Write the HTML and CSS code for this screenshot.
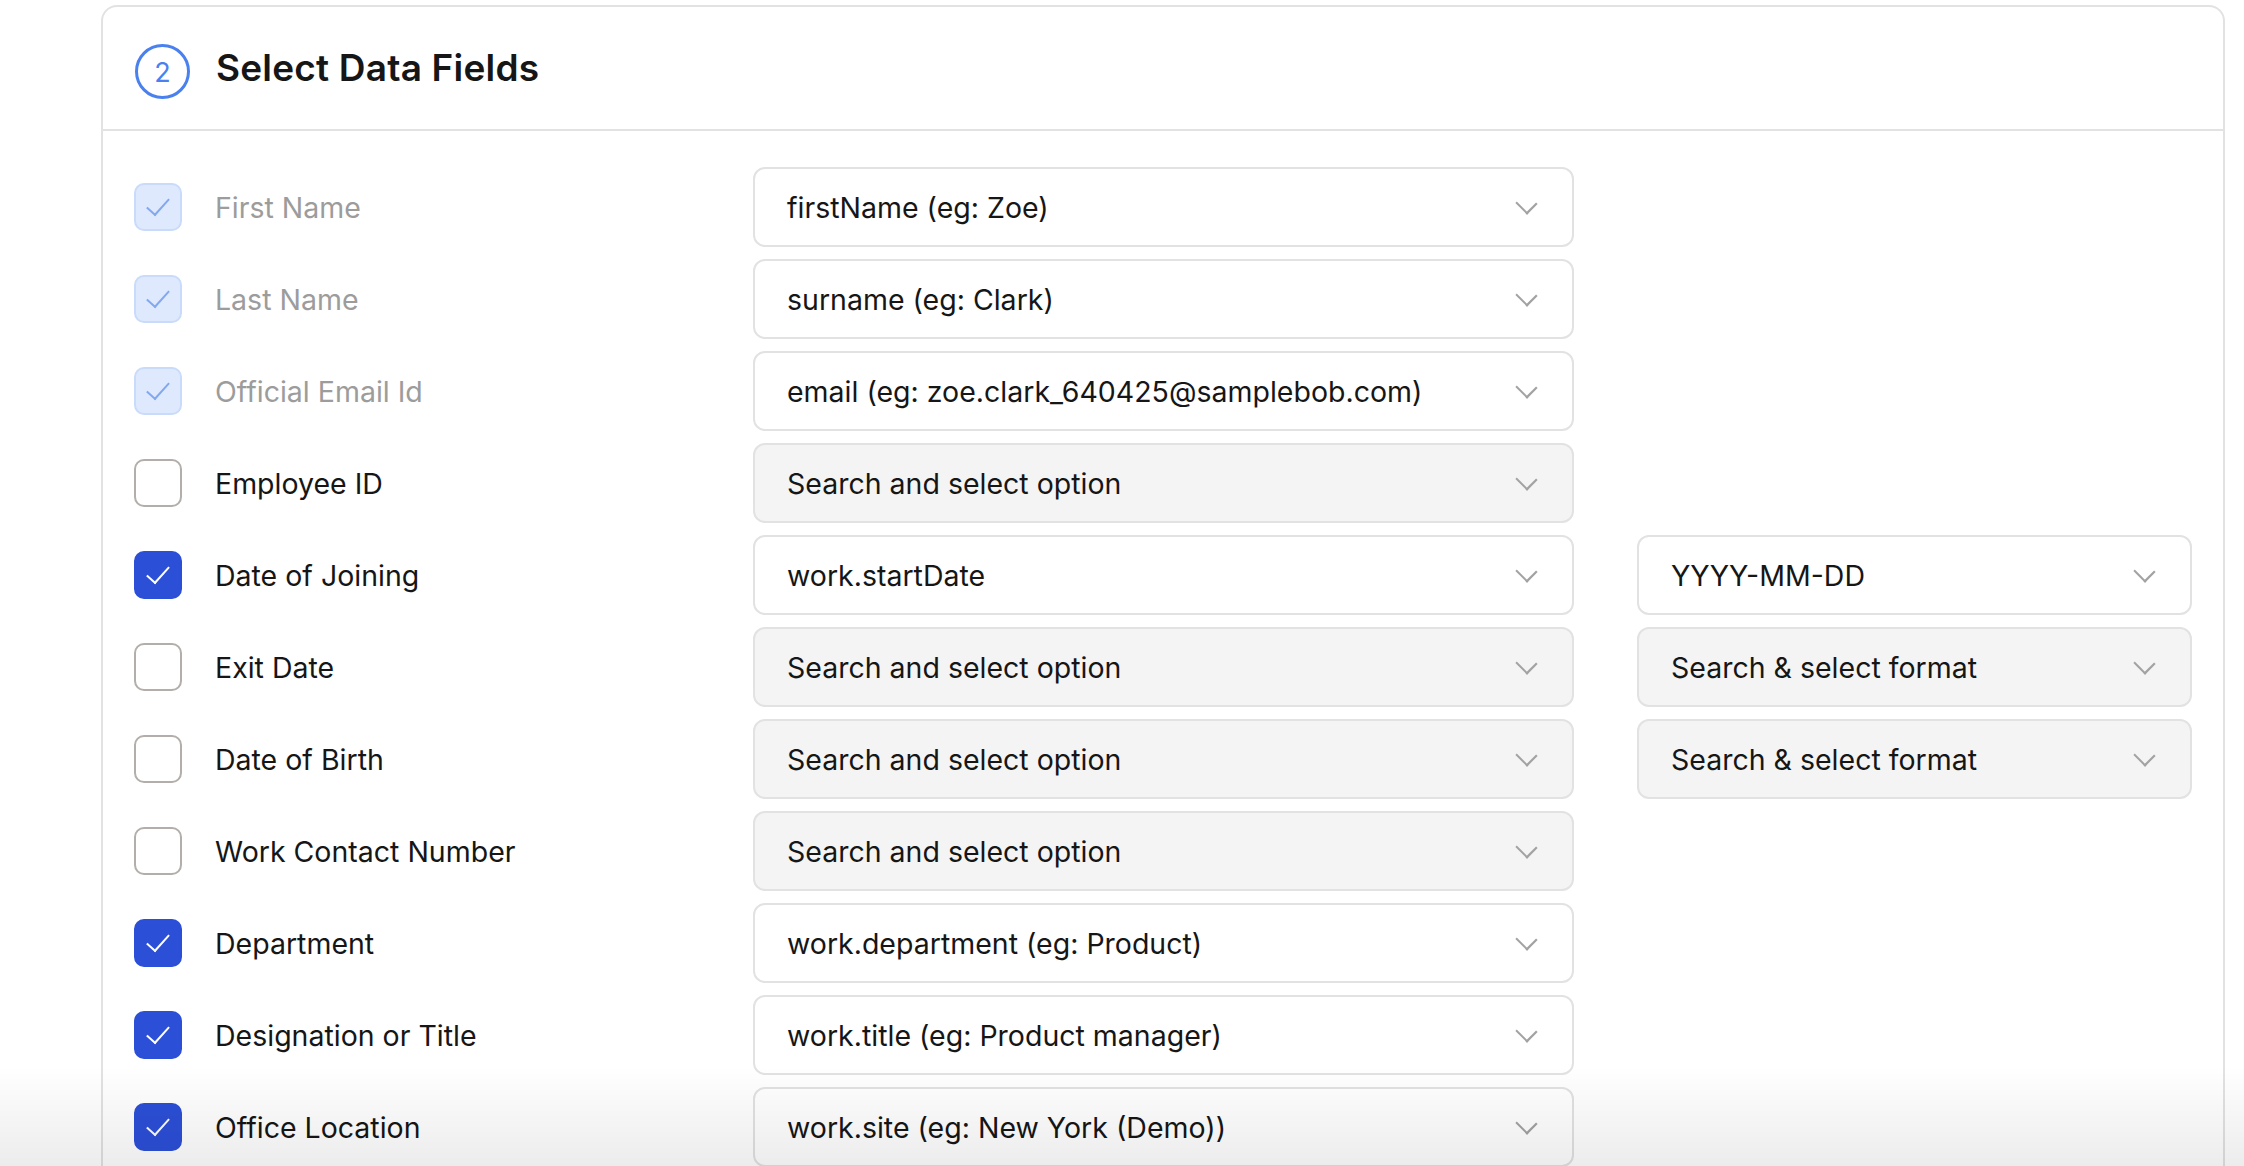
FILE: index.html
```html
<!DOCTYPE html>
<html lang="en">
<head>
  <meta charset="UTF-8" />
  <meta name="viewport" content="width=device-width, initial-scale=1.0"/>
  <title>Select Data Fields</title>
  <link rel="stylesheet" href="styles.css">
</head>
<body>
  <div class="page">
    <div class="card">
      <div class="card-header">
        <span class="step">2</span>
        <h2>Select Data Fields</h2>
      </div>

      <div class="fields">
        <!-- required fields, always mapped -->
        <div class="row">
          <label class="field locked"><span class="box"></span>First Name</label>
          <div class="select filled">firstName (eg: Zoe)</div>
        </div>
        <div class="row">
          <label class="field locked"><span class="box"></span>Last Name</label>
          <div class="select filled">surname (eg: Clark)</div>
        </div>
        <div class="row">
          <label class="field locked"><span class="box"></span>Official Email Id</label>
          <div class="select filled">email (eg: zoe.clark_640425@samplebob.com)</div>
        </div>

        <!-- optional fields -->
        <div class="row">
          <label class="field"><span class="box"></span>Employee ID</label>
          <div class="select">Search and select option</div>
        </div>
        <div class="row">
          <label class="field checked"><span class="box"></span>Date of Joining</label>
          <div class="select filled">work.startDate</div>
          <div class="select filled format">YYYY-MM-DD</div>
        </div>
        <div class="row">
          <label class="field"><span class="box"></span>Exit Date</label>
          <div class="select">Search and select option</div>
          <div class="select format">Search &amp; select format</div>
        </div>
        <div class="row">
          <label class="field"><span class="box"></span>Date of Birth</label>
          <div class="select">Search and select option</div>
          <div class="select format">Search &amp; select format</div>
        </div>
        <div class="row">
          <label class="field"><span class="box"></span>Work Contact Number</label>
          <div class="select">Search and select option</div>
        </div>
        <div class="row">
          <label class="field checked"><span class="box"></span>Department</label>
          <div class="select filled">work.department (eg: Product)</div>
        </div>
        <div class="row">
          <label class="field checked"><span class="box"></span>Designation or Title</label>
          <div class="select filled">work.title (eg: Product manager)</div>
        </div>
        <div class="row">
          <label class="field checked"><span class="box"></span>Office Location</label>
          <div class="select filled">work.site (eg: New York (Demo))</div>
        </div>
      </div>
    </div>
  </div>
  <div class="bottom-fade"></div>
</body>
</html>
```

FILE: styles.css
```css
:root {
  --text: #161616;
  --muted: #9c9c9c;
  --border: #e2e2e2;
  --primary: #2c4fd7;
  --step: #4b80ef;
  --field-empty: #f4f4f4;
}

* {
  margin: 0;
  padding: 0;
  box-sizing: border-box;
  font-family: 'Inter', 'Noto Sans', sans-serif;
}

body {
  background: #fff;
  color: var(--text);
  height: 100vh;
  overflow: hidden;
}

.page {
  padding: 5px 19px 0 101px;
}

.card {
  border: 2px solid var(--border);
  border-bottom: none;
  border-radius: 16px 16px 0 0;
  background: #fff;
}

.card-header {
  display: flex;
  align-items: center;
  height: 124px;
  padding: 0 32px 2px;
  border-bottom: 2px solid var(--border);
}

.step {
  width: 55px;
  height: 55px;
  border: 3px solid var(--step);
  border-radius: 50%;
  display: flex;
  justify-content: center;
  align-items: center;
  color: var(--step);
  font-size: 27px;
  font-weight: 400;
  margin: 8px 26px 0 0;
  padding-top: 2px;
}

h2 {
  font-size: 37px;
  font-weight: 600;
  letter-spacing: 0.2px;
}

.fields {
  display: flex;
  flex-direction: column;
  gap: 12px;
  padding: 36px 31px 0;
}

.row {
  display: flex;
  align-items: center;
  height: 80px;
}

/* checkbox + label */
.field {
  width: 619px;
  display: flex;
  align-items: center;
  font-size: 28.5px;
  color: var(--text);
}

.box {
  width: 48px;
  height: 48px;
  border: 2px solid #b3aeaa;
  border-radius: 10px;
  margin-right: 33px;
  display: flex;
  justify-content: center;
  align-items: center;
  flex-shrink: 0;
}

.field.checked .box,
.field.locked .box {
  background: var(--primary);
  border-color: var(--primary);
}

.field.checked .box::after,
.field.locked .box::after {
  content: "";
  width: 20px;
  height: 10px;
  border-left: 2px solid #fff;
  border-bottom: 2px solid #fff;
  transform: translateY(-3px) rotate(-48deg);
}

.field.locked {
  color: var(--muted);
}

.field.locked .box {
  background: #dfe9fd;
  border-color: #c9dbfa;
}

.field.locked .box::after {
  border-color: #82a8f0;
}

/* dropdowns */
.select {
  position: relative;
  width: 821px;
  height: 80px;
  border: 2px solid var(--border);
  border-radius: 12px;
  background: var(--field-empty);
  display: flex;
  align-items: center;
  padding: 0 80px 0 32px;
  font-size: 28.5px;
  color: var(--text);
  white-space: nowrap;
}

.select.filled {
  background: #fff;
}

.select.format {
  width: 555px;
  margin-left: 63px;
}

.select::after {
  content: "";
  position: absolute;
  right: 38px;
  top: 27px;
  width: 13px;
  height: 13px;
  border-right: 2px solid #a2a2a2;
  border-bottom: 2px solid #a2a2a2;
  transform: rotate(45deg) scaleX(1.1);
}

.bottom-fade {
  position: fixed;
  left: 0;
  right: 0;
  bottom: 0;
  height: 100px;
  background: linear-gradient(to bottom, rgba(0, 0, 0, 0), rgba(0, 0, 0, 0.075));
  pointer-events: none;
}
```
